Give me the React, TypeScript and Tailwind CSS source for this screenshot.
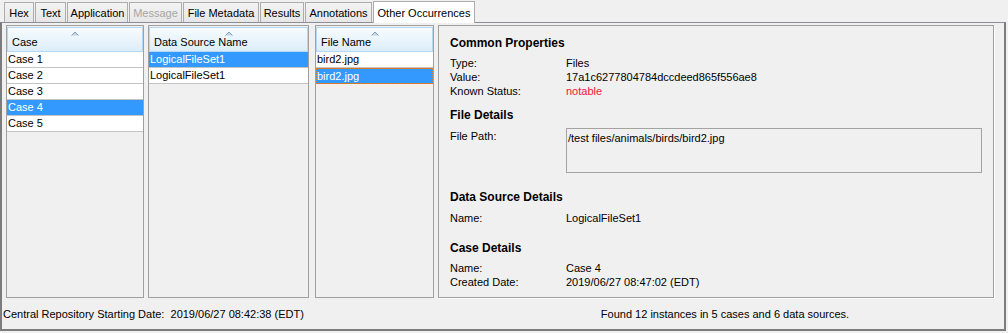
import React from "react";

const tabs: { label: string; w: string; disabled?: boolean; selected?: boolean }[] = [
  { label: "Hex", w: "w-[30px]" },
  { label: "Text", w: "w-[31px]" },
  { label: "Application", w: "w-[61px]" },
  { label: "Message", w: "w-[53px]", disabled: true },
  { label: "File Metadata", w: "w-[76px]" },
  { label: "Results", w: "w-[44px]" },
  { label: "Annotations", w: "w-[67px]" },
  { label: "Other Occurrences", w: "w-[102px]", selected: true },
];

function SortArrow() {
  return (
    <svg
      width="8"
      height="5"
      viewBox="0 0 8 5"
      className="absolute left-1/2 -translate-x-1/2 top-[3px]"
    >
      <path d="M0.5 4.5 L4 1 L7.5 4.5 Z" fill="#c3d5e6" />
      <path d="M0.5 4.5 L4 1 L7.5 4.5" fill="none" stroke="#7895b3" strokeWidth="0.9" />
    </svg>
  );
}

function Header({ title }: { title: string }) {
  return (
    <div className="relative h-[25px] border border-[#b4d8f1] bg-[linear-gradient(to_bottom,#f7fbfe_0%,#ebf5fc_45%,#dcedf9_100%)] flex items-center pt-[4px] pl-[4px] leading-[14px]">
      <SortArrow />
      <span>{title}</span>
    </div>
  );
}

function Row({
  text,
  selected,
  focused,
}: {
  text: string;
  selected?: boolean;
  focused?: boolean;
}) {
  return (
    <div
      className={
        "h-[16px] whitespace-nowrap " +
        (selected ? "bg-[#3399ff] text-white " : "bg-white ") +
        (focused
          ? "border border-dotted border-[#d9822b] leading-[14px] pl-0"
          : "border-b border-[#c4c4c4] leading-[15px] pl-[1px]")
      }
    >
      {text}
    </div>
  );
}

function TablePanel({
  w,
  title,
  rows,
}: {
  w: string;
  title: string;
  rows: { text: string; selected?: boolean; focused?: boolean }[];
}) {
  return (
    <div className={"h-full border border-[#a0a0a0] bg-[#f0f0f0] pt-[1px] " + w}>
      <Header title={title} />
      {rows.map((r, i) => (
        <Row key={i} {...r} />
      ))}
    </div>
  );
}

function Prop({ label, value, red }: { label: string; value: string; red?: boolean }) {
  return (
    <div className="flex leading-[14px]">
      <div className="w-[116px]">{label}</div>
      <div className={red ? "text-[#f3143c]" : ""}>{value}</div>
    </div>
  );
}

export default function App() {
  return (
    <div className="w-[1008px] h-[333px] bg-[#f0f0f0] overflow-hidden text-[11px] text-black font-['Liberation_Sans',Arial,sans-serif]">
      {/* Tab strip */}
      <div className="relative z-10 flex items-end h-[22px] pl-[4px] gap-[1px]">
        {tabs.map((t) =>
          t.selected ? (
            <div
              key={t.label}
              className={
                "h-[22px] -mb-[1px] border border-b-0 border-[#acacac] bg-white flex items-center justify-center leading-[14px] whitespace-nowrap " +
                t.w
              }
            >
              {t.label}
            </div>
          ) : (
            <div
              key={t.label}
              className={
                "h-[20px] border border-b-0 border-[#acacac] bg-[linear-gradient(to_bottom,#f3f3f3,#e6e6e6)] flex items-center justify-center pt-[1px] leading-[14px] whitespace-nowrap " +
                t.w +
                (t.disabled ? " text-[#a6a6a6]" : "")
              }
            >
              {t.label}
            </div>
          )
        )}
      </div>

      {/* Tab content */}
      <div className="w-[1006px] h-[309px] border-t border-t-[#8c8e94] border-x-2 border-b-2 border-x-[#7c7c7c] border-b-[#7c7c7c] flex flex-col">
        <div className="flex h-[275px] pt-[2px] pl-[4px]">
          <TablePanel
            w="w-[138px]"
            title="Case"
            rows={[
              { text: "Case 1" },
              { text: "Case 2" },
              { text: "Case 3" },
              { text: "Case 4", selected: true },
              { text: "Case 5" },
            ]}
          />
          <div className="w-[4px]" />
          <TablePanel
            w="w-[161px]"
            title="Data Source Name"
            rows={[{ text: "LogicalFileSet1", selected: true }, { text: "LogicalFileSet1" }]}
          />
          <div className="w-[6px]" />
          <TablePanel
            w="w-[119px]"
            title="File Name"
            rows={[{ text: "bird2.jpg" }, { text: "bird2.jpg", selected: true, focused: true }]}
          />
          <div className="w-[4px]" />
          <div className="w-[556px] h-full border border-[#a0a0a0] bg-[#f0f0f0] pl-[11px] pt-[10px] shadow-[1px_1px_0_#ffffff]">
            <div className="font-bold text-[12px] leading-[14px]">Common Properties</div>
            <div className="mt-[6px]">
              <Prop label="Type:" value="Files" />
              <Prop label="Value:" value="17a1c6277804784dccdeed865f556ae8" />
              <Prop label="Known Status:" value="notable" red />
            </div>
            <div className="mt-[10px] font-bold text-[12px] leading-[14px]">File Details</div>
            <div className="mt-[6px] flex">
              <div className="w-[116px] pt-[1px] leading-[14px]">File Path:</div>
              <div className="w-[416px] h-[45px] border border-[#a3a3a3] bg-[#f0f0f0] pt-[2px] pl-[1px] leading-[14px]">
                /test files/animals/birds/bird2.jpg
              </div>
            </div>
            <div className="mt-[17px] font-bold text-[12px] leading-[14px]">Data Source Details</div>
            <div className="mt-[7px]">
              <Prop label="Name:" value="LogicalFileSet1" />
            </div>
            <div className="mt-[16px] font-bold text-[12px] leading-[14px]">Case Details</div>
            <div className="mt-[6px]">
              <Prop label="Name:" value="Case 4" />
              <Prop label="Created Date:" value="2019/06/27 08:47:02 (EDT)" />
            </div>
          </div>
        </div>

        {/* Status bar */}
        <div className="flex items-center h-[31px] leading-[14px]">
          <div className="w-[436px] pl-[1px] whitespace-pre">
            {"Central Repository Starting Date:  2019/06/27 08:42:38 (EDT)"}
          </div>
          <div className="flex-1 text-center pl-[8px]">
            Found 12 instances in 5 cases and 6 data sources.
          </div>
        </div>
      </div>
    </div>
  );
}
